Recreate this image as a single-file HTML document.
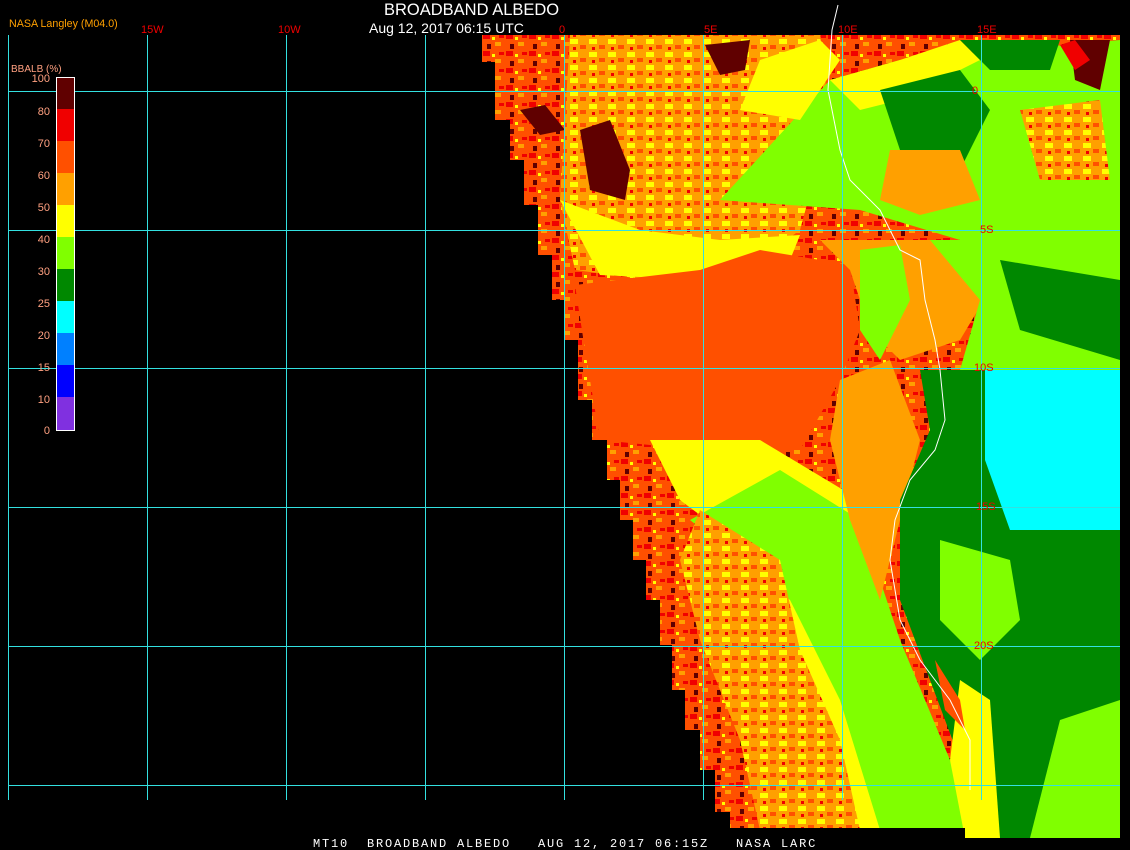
<!DOCTYPE html>
<html><head><style>
html,body{margin:0;padding:0;background:#000;width:1130px;height:850px;overflow:hidden}
svg{display:block}
text{font-family:"Liberation Sans",sans-serif}
</style></head><body>
<svg width="1130" height="850" viewBox="0 0 1130 850">
<rect width="1130" height="850" fill="#000"/>
<defs>
<clipPath id="c">
<polygon points="482,35 1120,35 1120,838 965,838 965,828 730,828 730,812 715,812 715,770 700,770 700,730 685,730 685,690 672,690 672,645 660,645 660,600 646,600 646,560 633,560 633,520 620,520 620,480 607,480 607,440 592,440 592,400 578,400 578,340 565,340 565,300 552,300 552,255 538,255 538,205 524,205 524,160 510,160 510,120 495,120 495,62 482,62"/>
</clipPath>
<pattern id="tex" width="23" height="17" patternUnits="userSpaceOnUse">
<rect width="23" height="17" fill="#ff5000"/>
<rect x="0" y="0" width="7" height="5" fill="#f00000"/>
<rect x="12" y="8" width="6" height="4" fill="#ffa000"/>
<rect x="4" y="10" width="4" height="5" fill="#600000"/>
<rect x="16" y="1" width="5" height="3" fill="#f00000"/>
<rect x="9" y="3" width="3" height="3" fill="#ffff00"/>
</pattern>
<pattern id="tex2" width="19" height="13" patternUnits="userSpaceOnUse">
<rect width="19" height="13" fill="#ffa000"/>
<rect x="0" y="0" width="8" height="5" fill="#ffff00"/>
<rect x="10" y="6" width="6" height="4" fill="#ff5000"/>
<rect x="3" y="8" width="3" height="3" fill="#f00000"/>
</pattern>
</defs>
<g clip-path="url(#c)">
<rect x="470" y="30" width="660" height="820" fill="url(#tex)"/>
<path d="M570,35 L820,35 L830,120 L800,230 L760,260 L650,280 L575,270 L560,200 Z" fill="url(#tex2)"/>
<path d="M560,200 L640,230 L720,240 L800,235 L790,260 L700,280 L600,275 Z" fill="#ffff00"/>
<path d="M720,200 L830,80 L900,60 L1120,40 L1120,240 L960,240 L860,210 Z" fill="#80ff00"/>
<path d="M740,110 L800,120 L840,60 L820,40 L760,60 Z" fill="#ffff00"/>
<path d="M830,80 L900,60 L960,40 L980,60 L900,100 L860,110 Z" fill="#ffff00"/>
<path d="M880,90 L960,70 L990,110 L960,170 L900,150 Z" fill="#008800"/>
<path d="M960,40 L1060,40 L1050,70 L990,70 Z" fill="#008800"/>
<path d="M890,150 L960,150 L980,200 L920,215 L880,200 Z" fill="#ffa000"/>
<path d="M1020,110 L1100,100 L1110,180 L1040,180 Z" fill="url(#tex2)"/>
<path d="M1070,40 L1110,40 L1100,90 L1075,80 Z" fill="#600000"/>
<path d="M1060,45 L1075,40 L1090,60 L1075,70 Z" fill="#f00000"/>
<path d="M580,130 L610,120 L630,170 L625,200 L590,190 Z" fill="#600000"/>
<path d="M520,110 L545,105 L565,130 L540,135 Z" fill="#600000"/>
<path d="M705,45 L750,40 L745,70 L720,75 Z" fill="#600000"/>
<path d="M575,285 L700,270 L760,250 L850,265 L860,330 L840,380 L800,450 L700,450 L600,440 L585,350 Z" fill="#ff5000"/>
<path d="M820,240 L880,240 L960,240 L990,290 L960,340 L900,360 L870,330 L850,270 Z" fill="#ffa000"/>
<path d="M860,250 L900,245 L910,300 L880,360 L860,330 Z" fill="#80ff00"/>
<path d="M930,240 L1120,240 L1120,370 L960,370 L980,300 Z" fill="#80ff00"/>
<path d="M1000,260 L1120,280 L1120,360 L1020,330 Z" fill="#008800"/>
<path d="M650,440 L760,440 L860,500 L880,600 L920,700 L960,830 L850,830 L820,700 L760,560 L680,500 Z" fill="#ffff00"/>
<path d="M690,520 L780,470 L860,520 L900,640 L950,760 L975,830 L880,830 L840,700 L790,600 Z" fill="#80ff00"/>
<path d="M700,510 L780,560 L800,650 L840,740 L860,830 L760,830 L740,740 L700,640 L680,560 Z" fill="url(#tex2)"/>
<path d="M840,380 L890,360 L920,440 L900,520 L880,600 L850,520 L830,440 Z" fill="#ffa000"/>
<path d="M920,370 L1120,370 L1120,838 L965,838 L960,760 L930,680 L900,600 L900,500 L930,430 Z" fill="#008800"/>
<path d="M985,370 L1120,370 L1120,530 L1010,530 L985,460 Z" fill="#00ffff"/>
<path d="M1000,420 L1030,400 L1050,470 L1020,500 Z" fill="#00ffff"/>
<path d="M940,540 L1010,560 L1020,620 L980,660 L940,620 Z" fill="#80ff00"/>
<path d="M1060,720 L1120,700 L1120,838 L1030,838 Z" fill="#80ff00"/>
<path d="M960,680 L990,700 L1000,838 L965,838 L950,760 Z" fill="#ffff00"/>
<path d="M935,660 L960,700 L965,730 L945,710 Z" fill="#ff5000"/>
</g>
<polyline points="838,5 832,30 828,90 840,150 850,180 880,210 900,250 920,260 925,300 935,340 940,370 945,420 935,450 910,480 895,520 890,560 900,620 920,660 950,700 970,740 970,790" fill="none" stroke="#fff" stroke-width="1"/>
<g stroke="#33e0e0" stroke-width="1">
<line x1="8.5" y1="35" x2="8.5" y2="800"/>
<line x1="147.5" y1="35" x2="147.5" y2="800"/>
<line x1="286.5" y1="35" x2="286.5" y2="800"/>
<line x1="425.5" y1="35" x2="425.5" y2="800"/>
<line x1="564.5" y1="35" x2="564.5" y2="800"/>
<line x1="703.5" y1="35" x2="703.5" y2="800"/>
<line x1="842.5" y1="35" x2="842.5" y2="800"/>
<line x1="981.5" y1="35" x2="981.5" y2="800"/>
<line x1="8" y1="91.5" x2="1120" y2="91.5"/>
<line x1="8" y1="230.5" x2="1120" y2="230.5"/>
<line x1="8" y1="368.5" x2="1120" y2="368.5"/>
<line x1="8" y1="507.5" x2="1120" y2="507.5"/>
<line x1="8" y1="646.5" x2="1120" y2="646.5"/>
<line x1="8" y1="785.5" x2="1120" y2="785.5"/>
</g>
<g fill="#f00000" font-size="11">
<text x="141" y="33">15W</text><text x="278" y="33">10W</text><text x="559" y="33">0</text>
<text x="704" y="33">5E</text><text x="838" y="33">10E</text><text x="977" y="33">15E</text>
<text x="972" y="94">0</text><text x="980" y="233">5S</text><text x="974" y="371">10S</text>
<text x="976" y="510">15S</text><text x="974" y="649">20S</text>
</g>
<text x="384" y="15" fill="#fff" font-size="16.5">BROADBAND ALBEDO</text>
<text x="369" y="33" fill="#fff" font-size="14">Aug 12, 2017 06:15 UTC</text>
<text x="9" y="27" fill="#ffa000" font-size="10.7">NASA Langley (M04.0)</text>
<text x="11" y="72" fill="#ffa080" font-size="10">BBALB (%)</text>
<g>
<rect x="57" y="77" width="17" height="32" fill="#600000"/>
<rect x="57" y="109" width="17" height="32" fill="#f00000"/>
<rect x="57" y="141" width="17" height="32" fill="#ff5000"/>
<rect x="57" y="173" width="17" height="32" fill="#ffa000"/>
<rect x="57" y="205" width="17" height="32" fill="#ffff00"/>
<rect x="57" y="237" width="17" height="32" fill="#80ff00"/>
<rect x="57" y="269" width="17" height="32" fill="#008800"/>
<rect x="57" y="301" width="17" height="32" fill="#00ffff"/>
<rect x="57" y="333" width="17" height="32" fill="#0080ff"/>
<rect x="57" y="365" width="17" height="32" fill="#0000ff"/>
<rect x="57" y="397" width="17" height="33" fill="#8030e0"/>
<rect x="56.5" y="77.5" width="18" height="353" fill="none" stroke="#fff"/>
</g>
<g fill="#ffa080" font-size="11" text-anchor="end">
<text x="50" y="82">100</text><text x="50" y="115">80</text><text x="50" y="147">70</text>
<text x="50" y="179">60</text><text x="50" y="211">50</text><text x="50" y="243">40</text>
<text x="50" y="275">30</text><text x="50" y="307">25</text><text x="50" y="339">20</text>
<text x="50" y="371">15</text><text x="50" y="403">10</text><text x="50" y="434">0</text>
</g>
<text x="313" y="847" fill="#fff" font-size="12" style="font-family:'Liberation Mono',monospace;letter-spacing:1.8px" xml:space="preserve">MT10  BROADBAND ALBEDO   AUG 12, 2017 06:15Z   NASA LARC</text>
</svg>
</body></html>
